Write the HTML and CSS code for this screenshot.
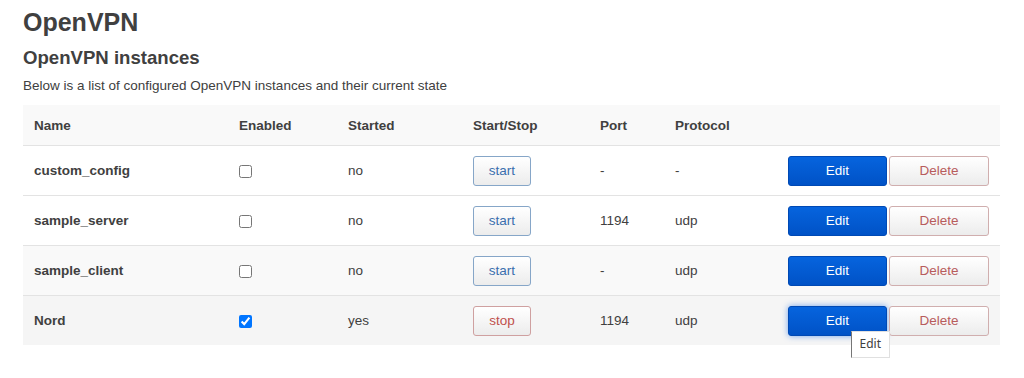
FILE: index.html
```html
<!DOCTYPE html>
<html lang="en">
<head>
    <meta charset="UTF-8">
    <title>OpenVPN</title>
    <link rel="stylesheet" href="styles.css">
</head>
<body>
    <div class="container">
        <h2>OpenVPN</h2>
        <h3>OpenVPN instances</h3>
        <p class="descr">Below is a list of configured OpenVPN instances and their current state</p>

        <table class="instances">
            <colgroup>
                <col class="c-name">
                <col class="c-enabled">
                <col class="c-started">
                <col class="c-startstop">
                <col class="c-port">
                <col class="c-proto">
                <col>
            </colgroup>
            <thead>
                <tr>
                    <th>Name</th>
                    <th>Enabled</th>
                    <th>Started</th>
                    <th>Start/Stop</th>
                    <th>Port</th>
                    <th>Protocol</th>
                    <th></th>
                </tr>
            </thead>
            <tbody>
                <tr class="row-1">
                    <td class="name">custom_config</td>
                    <td><input type="checkbox"></td>
                    <td>no</td>
                    <td><button class="btn btn-start">start</button></td>
                    <td>-</td>
                    <td>-</td>
                    <td class="actions"><button class="btn btn-edit">Edit</button><button class="btn btn-delete">Delete</button></td>
                </tr>
                <tr class="row-1">
                    <td class="name">sample_server</td>
                    <td><input type="checkbox"></td>
                    <td>no</td>
                    <td><button class="btn btn-start">start</button></td>
                    <td>1194</td>
                    <td>udp</td>
                    <td class="actions"><button class="btn btn-edit">Edit</button><button class="btn btn-delete">Delete</button></td>
                </tr>
                <tr class="row-2">
                    <td class="name">sample_client</td>
                    <td><input type="checkbox"></td>
                    <td>no</td>
                    <td><button class="btn btn-start">start</button></td>
                    <td>-</td>
                    <td>udp</td>
                    <td class="actions"><button class="btn btn-edit">Edit</button><button class="btn btn-delete">Delete</button></td>
                </tr>
                <tr class="row-hover">
                    <td class="name">Nord</td>
                    <td><input type="checkbox" checked></td>
                    <td>yes</td>
                    <td><button class="btn btn-stop">stop</button></td>
                    <td>1194</td>
                    <td>udp</td>
                    <td class="actions">
                        <button class="btn btn-edit hover">Edit</button><button class="btn btn-delete">Delete</button>
                        <span class="tooltip">Edit</span>
                    </td>
                </tr>
            </tbody>
        </table>
    </div>
</body>
</html>
```

FILE: styles.css
```css
html, body {
    height: 100%;
}

body {
    margin: 0;
    padding: 0;
    background-color: #fff;
    color: #404040;
    font-family: "Liberation Sans", Arial, sans-serif;
    font-size: 13.5px;
}

.container {
    padding: 7px 23px 40px 23px;
}

h2 {
    margin: 0;
    font-size: 25px;
    line-height: 30px;
    font-weight: bold;
}

h3 {
    margin: 9px 0 0 0;
    font-size: 18.6px;
    line-height: 24px;
    font-weight: bold;
}

.descr {
    margin: 7px 0 0 0;
    line-height: 18px;
}

.instances {
    width: 977px;
    margin-top: 10px;
    border-collapse: collapse;
    table-layout: fixed;
}

.c-name { width: 205px; }
.c-enabled { width: 109px; }
.c-started { width: 125px; }
.c-startstop { width: 127px; }
.c-port { width: 75px; }
.c-proto { width: 110px; }

th, td {
    padding: 0 11px;
    text-align: left;
    white-space: nowrap;
}

th {
    height: 40px;
    font-weight: bold;
    background-color: #f9f9f9;
}

td {
    height: 49px;
    border-top: 1px solid #e3e3e3;
}

td.name {
    font-weight: bold;
}

.row-1 { background-color: #fff; }
.row-2 { background-color: #f9f9f9; }
.row-hover { background-color: #f5f5f5; }

input[type="checkbox"] {
    margin: 0;
    vertical-align: middle;
}

.btn {
    height: 30px;
    padding: 0;
    font-family: "Liberation Sans", Arial, sans-serif;
    font-size: 13.5px;
    border-radius: 3px;
    cursor: pointer;
    vertical-align: middle;
}

.btn-start, .btn-stop {
    width: 58px;
    background: linear-gradient(#ffffff, #ececec);
}

.btn-start {
    border: 1px solid #86a6c8;
    color: #3a6fae;
}

.btn-stop {
    border: 1px solid #cfa0a0;
    color: #c0504d;
}

.actions {
    position: relative;
    text-align: right;
}

.btn-edit {
    width: 99px;
    border: 1px solid #0049b4;
    background: linear-gradient(#0664de, #0052c6);
    color: #fff;
}

.btn-edit.hover {
    box-shadow: 0 0 6px rgba(30, 110, 230, 0.6);
}

.btn-delete {
    width: 100px;
    margin-left: 2px;
    border: 1px solid #d0aeae;
    background: linear-gradient(#ffffff, #ececec);
    color: #b85c5c;
}

.tooltip {
    position: absolute;
    right: 110px;
    top: 35px;
    padding: 4px 8px 5px 8px;
    background-color: #fff;
    border: 1px solid #e0e0e0;
    border-left-color: #767676;
    color: #404040;
    font-family: "Noto Sans", sans-serif;
    font-size: 12px;
    line-height: 16px;
    text-align: left;
    z-index: 2;
}
```
